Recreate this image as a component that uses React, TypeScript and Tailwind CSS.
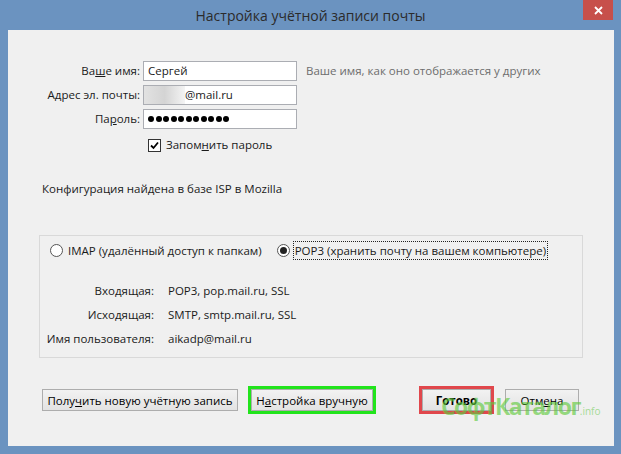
import React from 'react'

const font = { fontFamily: '"Open Sans", "Noto Sans", sans-serif' }

function Btn({ children, className = '' }: { children: React.ReactNode; className?: string }) {
  return (
    <div
      className={`h-[22px] flex items-center justify-center border border-[#adadad] bg-gradient-to-b from-[#f2f2f2] to-[#e3e3e3] text-[11.5px] text-black ${className}`}
    >
      {children}
    </div>
  )
}

export default function App() {
  return (
    <div className="w-[621px] h-[454px] bg-[#6b93c0] flex flex-col relative overflow-hidden" style={font}>
      {/* Title bar */}
      <div className="h-[30px] flex items-center justify-center text-[14px] text-[#2b2b2b] relative">
        Настройка учётной записи почты
        <div className="absolute right-[8px] top-0 w-[30px] h-[20px] bg-[#c7504b] flex items-center justify-center">
          <svg width="9" height="9" viewBox="0 0 9 9">
            <path d="M1 1L8 8M8 1L1 8" stroke="white" strokeWidth="1.8" />
          </svg>
        </div>
      </div>

      {/* Client area */}
      <div className="flex-1 ml-[8px] mr-[7px] mb-[8px] bg-[#f0f0f0] text-[11.5px] text-[#1a1a1a] flex flex-col pt-[31px]">
        <div className="flex flex-col gap-[4px]">
          <div className="flex items-center h-[20px]">
            <div className="w-[135px] text-right pr-[3px]">
              Ва<u>ш</u>е имя:
            </div>
            <div className="w-[154px] h-[20px] bg-white border border-[#abadb3] flex items-center px-[4px]">Сергей</div>
            <div className="ml-[9px] text-[#6d6d6d]">Ваше имя, как оно отображается у других</div>
          </div>
          <div className="flex items-center h-[20px]">
            <div className="w-[135px] text-right pr-[3px]">Адрес эл. почты:</div>
            <div className="w-[154px] h-[20px] bg-white border border-[#abadb3] flex items-center">
              <div className="w-[41px] h-full bg-gradient-to-r from-[#e2e2e2] via-[#d4d4d4] to-[#f4f4f4]" />
              <span>@mail.ru</span>
            </div>
          </div>
          <div className="flex items-center h-[20px]">
            <div className="w-[135px] text-right pr-[3px]">
              Па<u>р</u>оль:
            </div>
            <div className="w-[154px] h-[20px] bg-white border border-[#abadb3] flex items-center px-[4px] gap-[1.5px]">
              {Array.from({ length: 11 }).map((_, i) => (
                <span key={i} className="w-[6px] h-[6px] rounded-full bg-black" />
              ))}
            </div>
          </div>
        </div>

        <div className="flex items-center mt-[8px] ml-[140px] h-[16px]">
          <div className="w-[13px] h-[13px] border border-[#333] bg-white flex items-center justify-center">
            <svg width="9" height="9" viewBox="0 0 9 9">
              <path d="M1 4.5L3.5 7L8 1.5" stroke="black" strokeWidth="1.8" fill="none" />
            </svg>
          </div>
          <span className="ml-[5px]">
            Запом<u>н</u>ить пароль
          </span>
        </div>

        <div className="ml-[34px] mt-[27px]">Конфигурация найдена в базе ISP в Mozilla</div>

        {/* Group box */}
        <div className="ml-[31px] mr-[31px] mt-[38px] h-[123px] border border-[#d9d9d9] flex flex-col">
          <div className="flex items-center mt-[5px] h-[18px]">
            <div className="ml-[10px] w-[13px] h-[13px] rounded-full border border-[#555] bg-white" />
            <span className="ml-[5px]">IMAP (удалённый доступ к папкам)</span>
            <div className="ml-[15px] w-[13px] h-[13px] rounded-full border border-[#555] bg-white flex items-center justify-center">
              <div className="w-[7px] h-[7px] rounded-full bg-[#222]" />
            </div>
            <span className="ml-[3px] px-[1px] border border-dotted border-[#222]">POP3 (хранить почту на вашем компьютере)</span>
          </div>
          <div className="grid grid-cols-[114px_auto] gap-x-[14px] gap-y-[6px] mt-[23px] leading-[18px]">
            <div className="text-right">Входящая:</div>
            <div>POP3, pop.mail.ru, SSL</div>
            <div className="text-right">Исходящая:</div>
            <div>SMTP, smtp.mail.ru, SSL</div>
            <div className="text-right">Имя пользователя:</div>
            <div>aikadp@mail.ru</div>
          </div>
        </div>

        {/* Buttons */}
        <div className="flex items-center mt-[28px] ml-[34px] mr-[35px] h-[28px]">
          <Btn className="w-[196px]">
            Полу<u>ч</u>ить новую учётную запись
          </Btn>
          <div className="ml-[10px] border-[3px] border-[#22e41c] p-0">
            <Btn className="w-[122px]">
              Н<u>а</u>стройка вручную
            </Btn>
          </div>
          <div className="ml-auto border-[3px] border-[#e0474c]">
            <Btn className="w-[69px] font-bold">Готово</Btn>
          </div>
          <Btn className="ml-[11px] w-[74px]">
            Отм<u>е</u>на
          </Btn>
        </div>
      </div>

      {/* Watermark */}
      <div className="absolute left-[441px] top-[395px] whitespace-nowrap text-[23px] font-bold text-[#5fca3c]/65 leading-none tracking-[-1.6px] pointer-events-none">
        СофтКаталог<span className="text-[10px] font-normal text-[#8fd47c]/80 tracking-normal">.info</span>
      </div>
    </div>
  )
}
